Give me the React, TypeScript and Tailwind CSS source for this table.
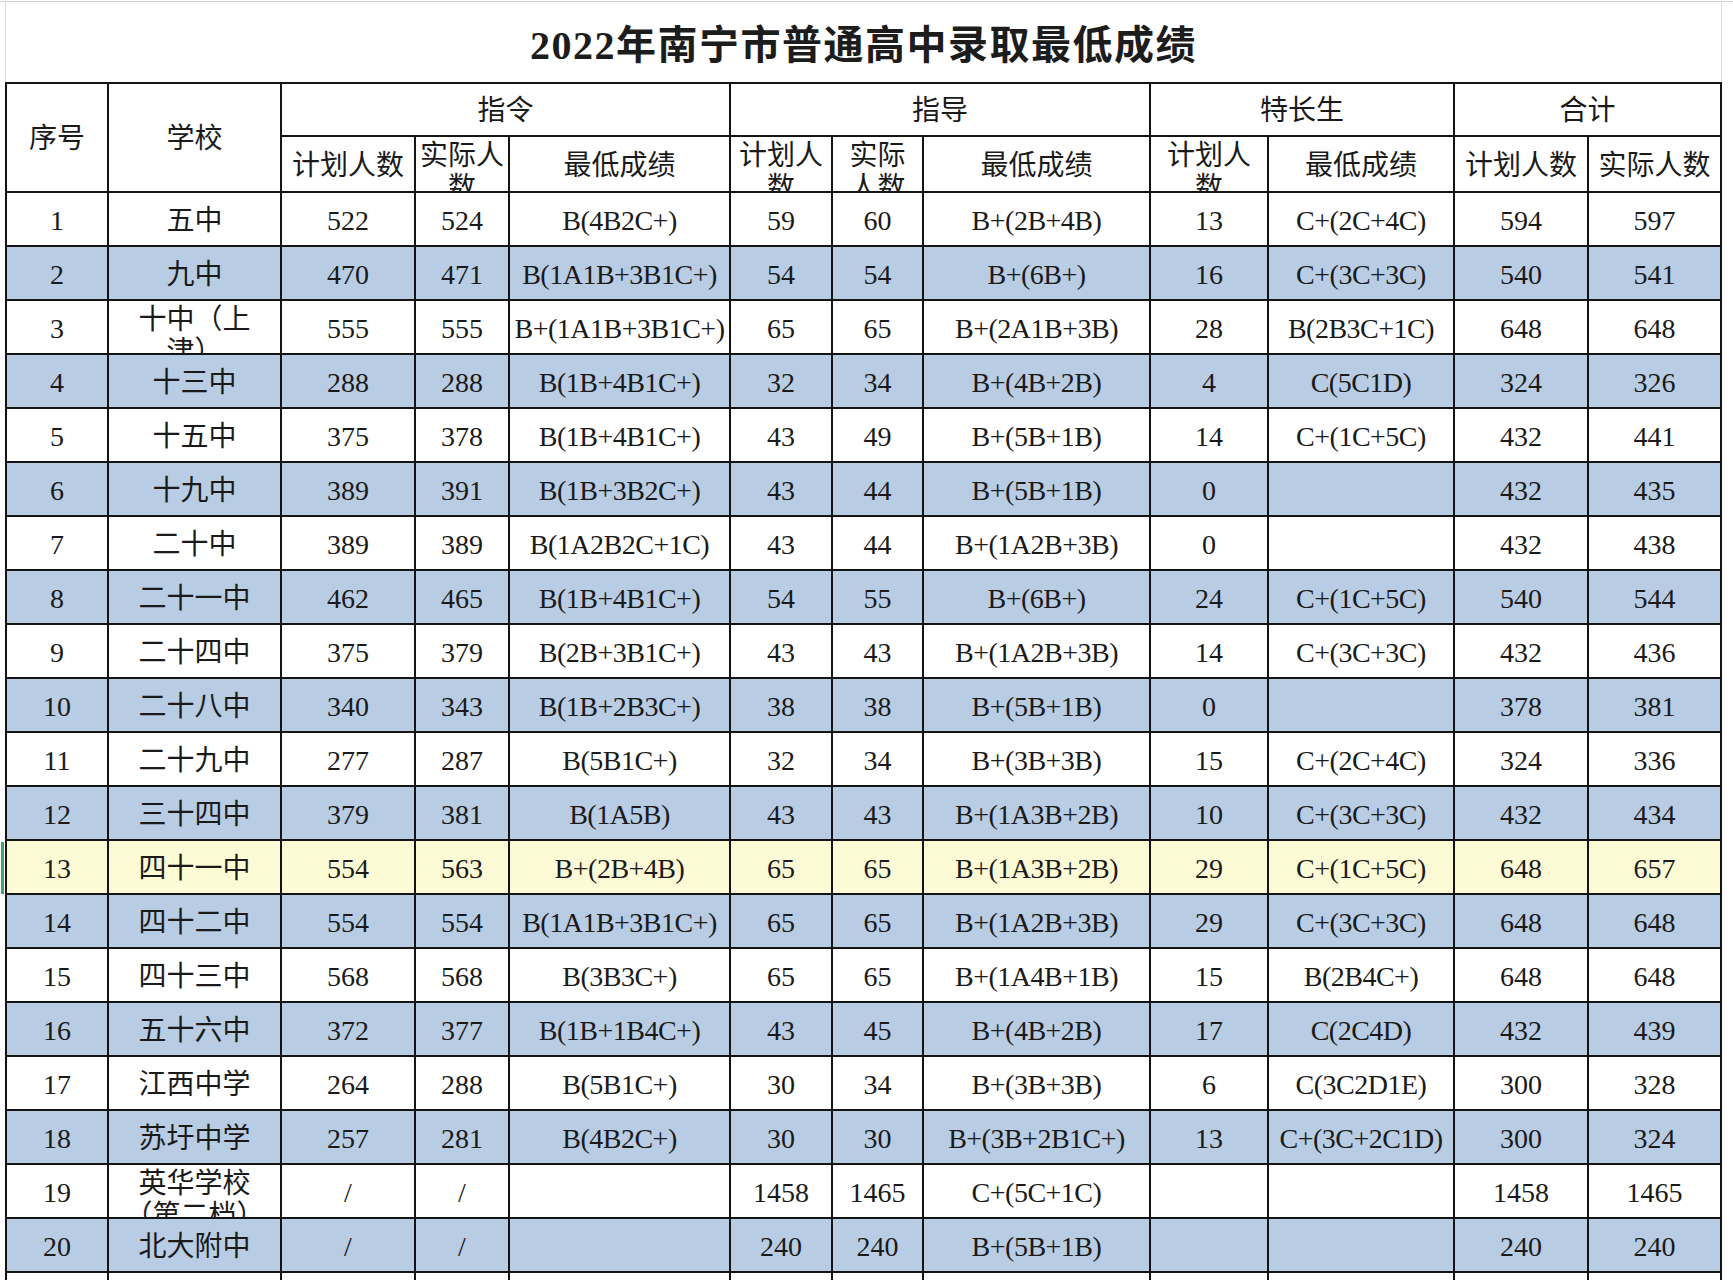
import React from "react";

type Row = [string, string, string, string, string, string, string, string, string, string, string, string];

const rows: Row[] = [
  ["1", "五中", "522", "524", "B(4B2C+)", "59", "60", "B+(2B+4B)", "13", "C+(2C+4C)", "594", "597"],
  ["2", "九中", "470", "471", "B(1A1B+3B1C+)", "54", "54", "B+(6B+)", "16", "C+(3C+3C)", "540", "541"],
  ["3", "十中（上津）", "555", "555", "B+(1A1B+3B1C+)", "65", "65", "B+(2A1B+3B)", "28", "B(2B3C+1C)", "648", "648"],
  ["4", "十三中", "288", "288", "B(1B+4B1C+)", "32", "34", "B+(4B+2B)", "4", "C(5C1D)", "324", "326"],
  ["5", "十五中", "375", "378", "B(1B+4B1C+)", "43", "49", "B+(5B+1B)", "14", "C+(1C+5C)", "432", "441"],
  ["6", "十九中", "389", "391", "B(1B+3B2C+)", "43", "44", "B+(5B+1B)", "0", "", "432", "435"],
  ["7", "二十中", "389", "389", "B(1A2B2C+1C)", "43", "44", "B+(1A2B+3B)", "0", "", "432", "438"],
  ["8", "二十一中", "462", "465", "B(1B+4B1C+)", "54", "55", "B+(6B+)", "24", "C+(1C+5C)", "540", "544"],
  ["9", "二十四中", "375", "379", "B(2B+3B1C+)", "43", "43", "B+(1A2B+3B)", "14", "C+(3C+3C)", "432", "436"],
  ["10", "二十八中", "340", "343", "B(1B+2B3C+)", "38", "38", "B+(5B+1B)", "0", "", "378", "381"],
  ["11", "二十九中", "277", "287", "B(5B1C+)", "32", "34", "B+(3B+3B)", "15", "C+(2C+4C)", "324", "336"],
  ["12", "三十四中", "379", "381", "B(1A5B)", "43", "43", "B+(1A3B+2B)", "10", "C+(3C+3C)", "432", "434"],
  ["13", "四十一中", "554", "563", "B+(2B+4B)", "65", "65", "B+(1A3B+2B)", "29", "C+(1C+5C)", "648", "657"],
  ["14", "四十二中", "554", "554", "B(1A1B+3B1C+)", "65", "65", "B+(1A2B+3B)", "29", "C+(3C+3C)", "648", "648"],
  ["15", "四十三中", "568", "568", "B(3B3C+)", "65", "65", "B+(1A4B+1B)", "15", "B(2B4C+)", "648", "648"],
  ["16", "五十六中", "372", "377", "B(1B+1B4C+)", "43", "45", "B+(4B+2B)", "17", "C(2C4D)", "432", "439"],
  ["17", "江西中学", "264", "288", "B(5B1C+)", "30", "34", "B+(3B+3B)", "6", "C(3C2D1E)", "300", "328"],
  ["18", "苏圩中学", "257", "281", "B(4B2C+)", "30", "30", "B+(3B+2B1C+)", "13", "C+(3C+2C1D)", "300", "324"],
  ["19", "英华学校（第二档）", "/", "/", "", "1458", "1465", "C+(5C+1C)", "", "", "1458", "1465"],
  ["20", "北大附中", "/", "/", "", "240", "240", "B+(5B+1B)", "", "", "240", "240"],
];

const gradeCols = new Set([4, 7, 9]);

function Cell({
  children,
  className = "",
  wrap = false,
  grade = false,
}: {
  children?: React.ReactNode;
  className?: string;
  wrap?: boolean;
  grade?: boolean;
}) {
  const base =
    "flex justify-center overflow-hidden border-r-2 border-b-2 border-[#141414] text-center";
  const mode = wrap
    ? "items-start pt-[3px] leading-[32px] px-[3px]"
    : "items-center leading-none whitespace-nowrap px-[3px] pt-[3px]";
  return (
    <div className={`${base} ${mode} ${grade ? "tracking-[-0.5px]" : ""} ${className}`}>
      <span className={wrap ? "block w-full" : ""}>{children}</span>
    </div>
  );
}

function SchoolCell({ lines, className }: { lines: [string, string]; className: string }) {
  return (
    <div
      className={`flex flex-col items-center justify-start overflow-hidden whitespace-nowrap border-r-2 border-b-2 border-[#141414] pt-[3px] text-center leading-[32px] ${className}`}
    >
      <span>{lines[0]}</span>
      <span>{lines[1]}</span>
    </div>
  );
}

export default function App() {
  return (
    <div className="relative h-[1280px] w-[1733px] overflow-hidden bg-white font-['Liberation_Serif','Noto_Sans_CJK_SC',serif] text-[28px] text-[#1a1a1a]">
      <div className="h-[2px] w-full border-b border-[#d2d2d2]" />
      <div className="pl-[5px]">
        {/* Title */}
        <div className="flex h-[80px] w-[1717px] items-center justify-center border-l border-r border-[#dcdcdc] pt-[8px]">
          <h1 className="text-[40px] font-bold leading-none tracking-[1.5px] text-[#1c1c1c]">
            2022年南宁市普通高中录取最低成绩
          </h1>
        </div>

        {/* Table */}
        <div className="grid w-[1717px] grid-cols-[102px_173px_134px_94px_221px_102px_91px_227px_118px_186px_134px_133px] grid-rows-[53px_56px] auto-rows-[54px] border-t-2 border-l-2 border-[#141414]">
          <Cell className="col-start-1 row-span-2 row-start-1 bg-white">序号</Cell>
          <Cell className="col-start-2 row-span-2 row-start-1 bg-white">学校</Cell>
          <Cell className="col-span-3 col-start-3 row-start-1 bg-white">指令</Cell>
          <Cell className="col-span-3 col-start-6 row-start-1 bg-white">指导</Cell>
          <Cell className="col-span-2 col-start-9 row-start-1 bg-white">特长生</Cell>
          <Cell className="col-span-2 col-start-11 row-start-1 bg-white">合计</Cell>

          <Cell className="col-start-3 row-start-2 bg-white">计划人数</Cell>
          <Cell wrap className="col-start-4 row-start-2 bg-white">实际人数</Cell>
          <Cell className="col-start-5 row-start-2 bg-white">最低成绩</Cell>
          <Cell wrap className="col-start-6 row-start-2 bg-white">计划人数</Cell>
          <Cell wrap className="col-start-7 row-start-2 bg-white">实际人数</Cell>
          <Cell className="col-start-8 row-start-2 bg-white">最低成绩</Cell>
          <Cell wrap className="col-start-9 row-start-2 bg-white">计划人数</Cell>
          <Cell className="col-start-10 row-start-2 bg-white">最低成绩</Cell>
          <Cell className="col-start-11 row-start-2 bg-white">计划人数</Cell>
          <Cell className="col-start-12 row-start-2 bg-white">实际人数</Cell>

          {rows.map((r, i) => {
            const bg = i === 12 ? "bg-[#fdfbd5]" : i % 2 === 1 ? "bg-[#b8cce4]" : "bg-white";
            return r.map((v, j) => {
              if (j === 1 && v === "十中（上津）") {
                return <SchoolCell key={`${i}-${j}`} lines={["十中（上", "津）"]} className={bg} />;
              }
              if (j === 1 && v === "英华学校（第二档）") {
                return <SchoolCell key={`${i}-${j}`} lines={["英华学校", "（第二档）"]} className={bg} />;
              }
              return (
                <Cell key={`${i}-${j}`} grade={gradeCols.has(j)} className={bg}>
                  {v}
                </Cell>
              );
            });
          })}
          {Array.from({ length: 12 }).map((_, j) => (
            <Cell key={`tail-${j}`} className="bg-white" />
          ))}
        </div>
      </div>

      {/* selection indicator on row 13 */}
      <div className="absolute left-[1px] top-[842px] h-[52px] w-[3px] bg-[#3fa66a]" />
    </div>
  );
}
